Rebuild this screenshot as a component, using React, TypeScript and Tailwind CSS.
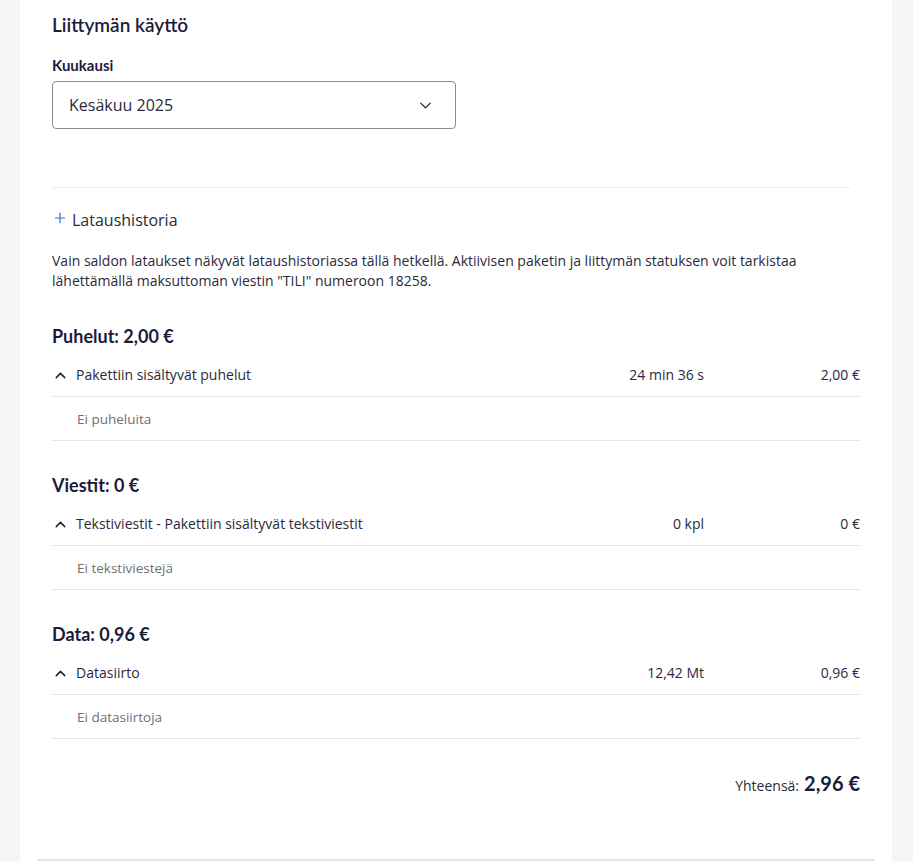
import React from 'react';
import { ChevronDown, ChevronUp, Plus } from 'lucide-react';

type Section = {
  title: string;
  label: string;
  amount: string;
  price: string;
  empty: string;
};

const sections: Section[] = [
  { title: 'Puhelut: 2,00 €', label: 'Pakettiin sisältyvät puhelut', amount: '24 min 36 s', price: '2,00 €', empty: 'Ei puheluita' },
  { title: 'Viestit: 0 €', label: 'Tekstiviestit - Pakettiin sisältyvät tekstiviestit', amount: '0 kpl', price: '0 €', empty: 'Ei tekstiviestejä' },
  { title: 'Data: 0,96 €', label: 'Datasiirto', amount: '12,42 Mt', price: '0,96 €', empty: 'Ei datasiirtoja' },
];

const heading = "font-['Lato',sans-serif]";

function UsageSection({ s }: { s: Section }) {
  return (
    <section className="mt-[32px]">
      <h3 className={`${heading} text-[18px] leading-[24px] font-bold text-[#1c1c3a]`}>{s.title}</h3>
      <div className="mt-[6px] h-[43px] flex items-center border-b border-[#e6e6e6] text-[14px] leading-[20px] text-[#2a2a3c]">
        <ChevronUp size={17} strokeWidth={2} className="text-[#1c1c3a] mr-[7px]" />
        <span className="flex-1">{s.label}</span>
        <span className="text-right">{s.amount}</span>
        <span className="w-[156px] text-right">{s.price}</span>
      </div>
      <div className="h-[44px] flex items-center pl-[25px] border-b border-[#e6e6e6] text-[13.5px] leading-[20px] text-[#6f6f6f]">
        {s.empty}
      </div>
    </section>
  );
}

export default function App() {
  return (
    <div className="min-h-screen bg-[#f6f6f6] font-['Open_Sans',sans-serif]">
      <div className="ml-[20px] w-[872px] bg-white px-[32px] pt-[12px] pb-[2px] min-h-[862px]">
        <h2 className={`${heading} text-[19px] leading-[26px] font-semibold text-[#1c1c3a]`}>Liittymän käyttö</h2>

        <label className={`${heading} block mt-[17px] text-[15px] leading-[20px] font-bold text-[#1c1c3a]`}>Kuukausi</label>
        <div className="mt-[6px] w-[404px] h-[48px] border border-[#8c8c8c] rounded-[4px] flex items-center justify-between pl-[16px] pr-[20px] text-[16px] text-[#2a2a3c]">
          <span>Kesäkuu 2025</span>
          <ChevronDown size={19} strokeWidth={1.5} className="text-[#1c1c3a]" />
        </div>

        <div className="mt-[58px] mr-[10px] border-t border-[#ececec]" />

        <button className="mt-[20px] flex items-center gap-[4px] text-[16px] leading-[24px] text-[#2a2a3c]">
          <Plus size={16} strokeWidth={1.8} className="text-[#2c6fd1] -mt-[5px]" />
          Lataushistoria
        </button>

        <p className="mt-[19px] pb-[1px] text-[14px] leading-[20px] text-[#2a2a3c] pr-[40px]">
          Vain saldon lataukset näkyvät lataushistoriassa tällä hetkellä. Aktiivisen paketin ja liittymän statuksen voit tarkistaa lähettämällä maksuttoman viestin "TILI" numeroon 18258.
        </p>

        {sections.map((s) => (
          <UsageSection key={s.title} s={s} />
        ))}

        <div className="mt-[30px] flex items-baseline justify-end gap-[5px] text-[#1c1c3a]">
          <span className="text-[14px] text-[#2a2a3c]">Yhteensä:</span>
          <span className={`${heading} text-[20px] leading-[28px] font-bold`}>2,96 €</span>
        </div>

        <div className="mt-[62px] -mx-[15px] border-t-2 border-[#e4e4e4]" />
      </div>
    </div>
  );
}
